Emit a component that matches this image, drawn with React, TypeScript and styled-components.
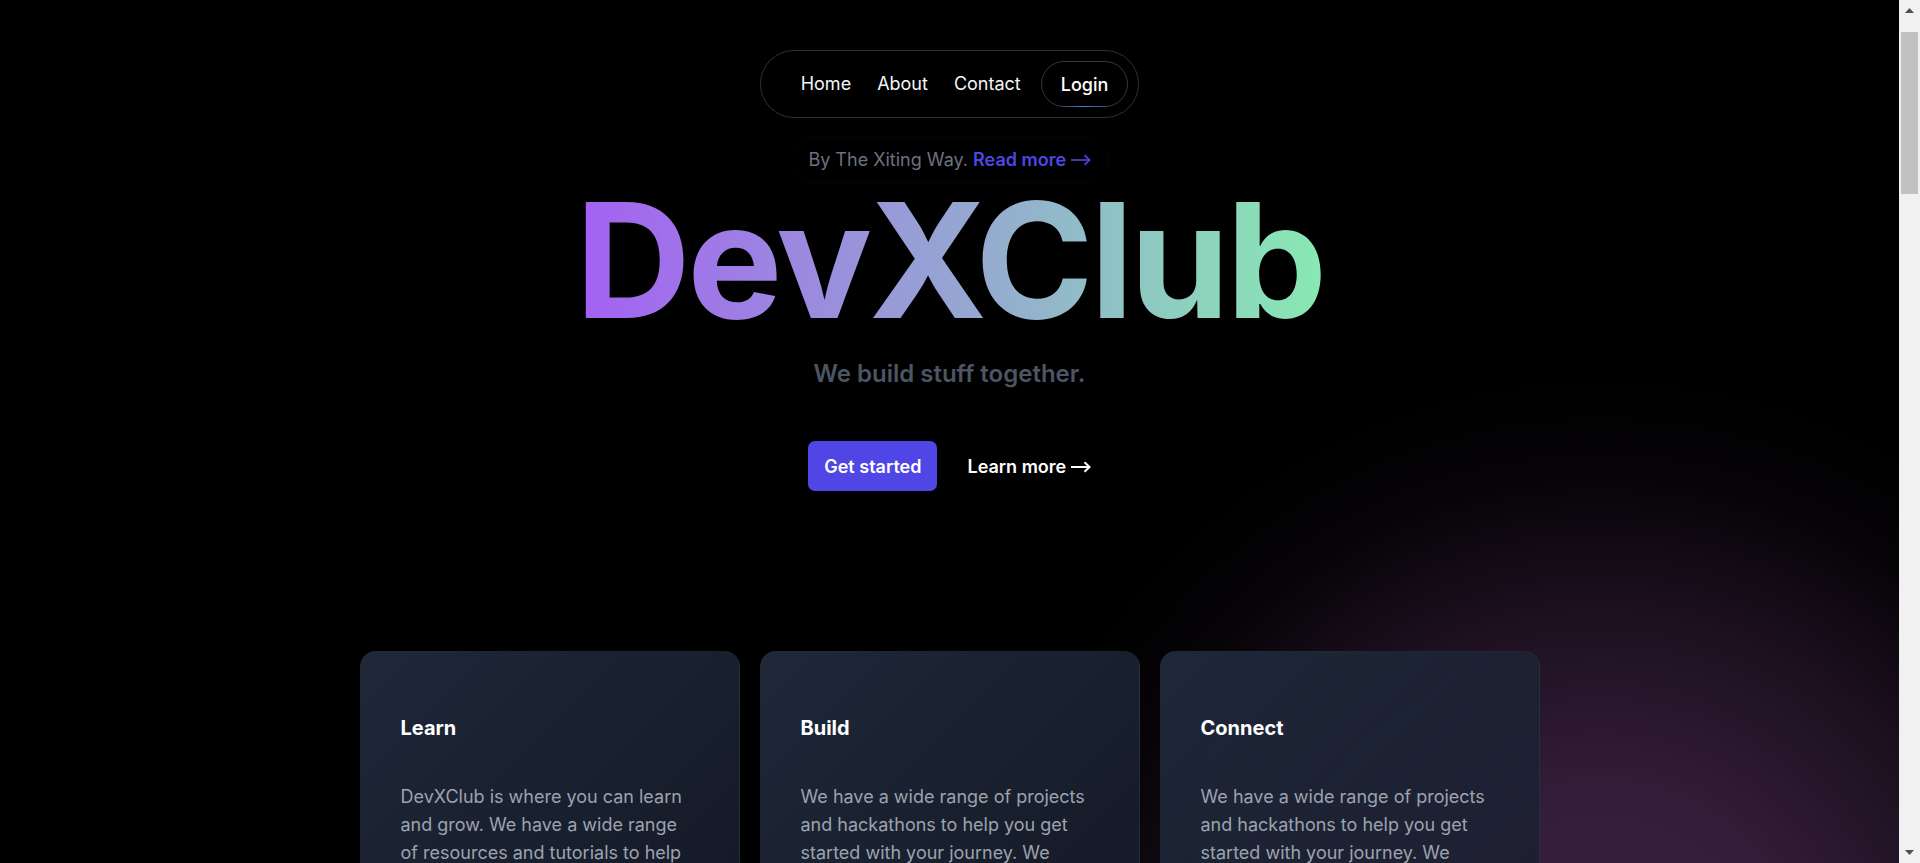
import React from "react";
import styled, { createGlobalStyle } from "styled-components";

const GlobalStyle = createGlobalStyle`
  html, body {
    margin: 0;
    padding: 0;
    height: 100%;
    overflow: hidden;
    background: #000;
  }
  body {
    font-family: Inter, "Noto Sans", "Liberation Sans", sans-serif;
    color: #fff;
    -webkit-font-smoothing: antialiased;
  }
  * { box-sizing: border-box; }
`;

const Shell = styled.div`
  display: flex;
  height: 100vh;
  background: #000;
`;

const Viewport = styled.div`
  flex: 1;
  height: 100%;
  overflow-y: auto;
  scrollbar-width: none;
  &::-webkit-scrollbar { display: none; }
`;

const ScrollRail = styled.div`
  width: 21px;
  height: 100%;
  flex-shrink: 0;
  display: flex;
  flex-direction: column;
  background: #f1f1f1;
`;

const RailButton = styled.div`
  height: 21px;
  display: flex;
  align-items: center;
  justify-content: center;
  flex-shrink: 0;
`;

const RailTrack = styled.div`
  flex: 1;
  padding: 11px 2px 0;
`;

const RailThumb = styled.div`
  height: 162px;
  background: #c1c1c1;
`;

const Page = styled.div`
  min-height: 4400px;
  background:
    radial-gradient(circle at 1600px 990px, rgba(58, 32, 63, 1) 0px, rgba(53, 30, 58, 0.97) 200px, rgba(38, 21, 42, 0.75) 380px, rgba(16, 9, 18, 0.35) 520px, rgba(0, 0, 0, 0) 620px),
    #000;
  background-repeat: no-repeat;
  display: flex;
  flex-direction: column;
  align-items: center;
`;

const Header = styled.header`
  padding-top: 50px;
  display: flex;
  justify-content: center;
`;

const NavPill = styled.nav`
  display: flex;
  align-items: center;
  gap: 2px;
  height: 68px;
  padding: 10px 10px 10px 28px;
  border: 1px solid #303030;
  border-radius: 999px;
`;

const NavLink = styled.a`
  padding: 0 12px;
  font-size: 18px;
  line-height: 28px;
  color: #f5f5f5;
  text-decoration: none;
`;

const LoginButton = styled.a`
  position: relative;
  margin-left: 6px;
  height: 46px;
  padding: 0 19px;
  display: flex;
  align-items: center;
  font-size: 18px;
  font-weight: 500;
  color: #fff;
  text-decoration: none;
  border: 1px solid #383838;
  border-radius: 999px;

  &::after {
    content: "";
    position: absolute;
    left: 50%;
    bottom: -1px;
    width: 52px;
    height: 1px;
    transform: translateX(-50%);
    background: linear-gradient(to right, rgba(59, 130, 246, 0), #3b82f6, rgba(59, 130, 246, 0));
  }
`;

const Hero = styled.section`
  display: flex;
  flex-direction: column;
  align-items: center;
  margin-top: 19px;
`;

const Tagline = styled.div`
  padding: 8px 16px;
  border: 1px solid rgba(255, 255, 255, 0.025);
  border-radius: 999px;
  font-size: 18px;
  line-height: 28px;
  color: #6b7280;
`;

const TaglineLink = styled.a`
  color: #4f46e5;
  font-weight: 600;
  text-decoration: none;
`;

const ArrowIcon = styled.svg<{ $weight: number }>`
  width: 20px;
  height: 12px;
  vertical-align: middle;
  margin-top: -2px;
  stroke: currentColor;
  stroke-width: ${(p) => p.$weight};
  fill: none;
  stroke-linecap: butt;
  stroke-linejoin: miter;
`;

const Arrow = ({ weight = 2 }: { weight?: number }) => (
  <ArrowIcon $weight={weight} viewBox="0 0 20 12" aria-hidden="true">
    <path d="M0 6 H18.5" />
    <path d="M13.5 1.2 L18.6 6 L13.5 10.8" />
  </ArrowIcon>
);

const Title = styled.h1`
  margin: 5px 0 0;
  font-size: 160px;
  line-height: 144px;
  font-weight: 700;
  letter-spacing: -3.4px;
  background: linear-gradient(to right, #a45ff3, #88eab2);
  -webkit-background-clip: text;
  background-clip: text;
  color: transparent;
  padding: 0 4px;
`;

const Subtitle = styled.p`
  margin: 26px 0 0;
  font-size: 24px;
  line-height: 32px;
  font-weight: 600;
  color: #4b5563;
`;

const Actions = styled.div`
  margin-top: 51px;
  display: flex;
  align-items: center;
  gap: 30px;
`;

const PrimaryButton = styled.a`
  display: flex;
  align-items: center;
  height: 50px;
  padding: 0 16px;
  border-radius: 7px;
  background: #4f46e5;
  color: #fff;
  font-size: 18px;
  font-weight: 600;
  text-decoration: none;
`;

const TextButton = styled.a`
  color: #fff;
  font-size: 18px;
  font-weight: 600;
  text-decoration: none;
`;

const CardGrid = styled.section`
  margin-top: 160px;
  width: 1180px;
  display: grid;
  grid-template-columns: repeat(3, 1fr);
  gap: 20px;
`;

const Card = styled.article`
  padding: 62px 40px 48px;
  border-radius: 16px;
  border: 1px solid rgba(255, 255, 255, 0.04);
  background: linear-gradient(135deg, rgba(31, 41, 58, 0.98), rgba(24, 30, 46, 0.78));
`;

const CardTitle = styled.h3`
  margin: 0;
  font-size: 20px;
  line-height: 28px;
  font-weight: 700;
  color: #fff;
`;

const CardText = styled.p`
  margin: 41px 0 0;
  font-size: 18px;
  line-height: 28px;
  color: #9ca3af;
`;

const Section = styled.section`
  margin-top: 200px;
  width: 1180px;
  display: flex;
  flex-direction: column;
  align-items: center;
  gap: 24px;
`;

const SectionTitle = styled.h2`
  margin: 0;
  font-size: 48px;
  line-height: 56px;
  font-weight: 700;
  color: #fff;
`;

const SectionText = styled.p`
  margin: 0;
  max-width: 720px;
  text-align: center;
  font-size: 18px;
  line-height: 28px;
  color: #9ca3af;
`;

const Panel = styled.div`
  width: 100%;
  height: 520px;
  border-radius: 16px;
  border: 1px solid rgba(255, 255, 255, 0.05);
  background: linear-gradient(135deg, rgba(31, 41, 58, 0.6), rgba(17, 24, 39, 0.4));
`;

const Footer = styled.footer`
  margin-top: auto;
  padding: 48px 0;
  font-size: 14px;
  color: #6b7280;
`;

const cards = [
  {
    title: "Learn",
    text: "DevXClub is where you can learn and grow. We have a wide range of resources and tutorials to help you get started with your journey as a developer.",
  },
  {
    title: "Build",
    text: "We have a wide range of projects and hackathons to help you get started with your journey. We encourage everyone to build real things together.",
  },
  {
    title: "Connect",
    text: "We have a wide range of projects and hackathons to help you get started with your journey. We connect developers from all over the world.",
  },
];

export default function App() {
  return (
    <>
      <GlobalStyle />
      <Shell>
        <Viewport>
          <Page>
            <Header>
              <NavPill>
                <NavLink href="#">Home</NavLink>
                <NavLink href="#">About</NavLink>
                <NavLink href="#">Contact</NavLink>
                <LoginButton href="#">Login</LoginButton>
              </NavPill>
            </Header>
            <Hero>
              <Tagline>
                By The Xiting Way.{" "}
                <TaglineLink href="#">
                  Read more <Arrow weight={1.6} />
                </TaglineLink>
              </Tagline>
              <Title>DevXClub</Title>
              <Subtitle>We build stuff together.</Subtitle>
              <Actions>
                <PrimaryButton href="#">Get started</PrimaryButton>
                <TextButton href="#">
                  Learn more <Arrow weight={2} />
                </TextButton>
              </Actions>
            </Hero>
            <CardGrid>
              {cards.map((c) => (
                <Card key={c.title}>
                  <CardTitle>{c.title}</CardTitle>
                  <CardText>{c.text}</CardText>
                </Card>
              ))}
            </CardGrid>
            <Section>
              <SectionTitle>Projects</SectionTitle>
              <SectionText>Explore what our members have been building together.</SectionText>
              <Panel />
            </Section>
            <Section>
              <SectionTitle>Events</SectionTitle>
              <SectionText>Hackathons, workshops and meetups for developers of every level.</SectionText>
              <Panel />
            </Section>
            <Footer>© DevXClub. All rights reserved.</Footer>
          </Page>
        </Viewport>
        <ScrollRail aria-hidden="true">
          <RailButton>
            <svg width="9" height="5" viewBox="0 0 9 5">
              <path d="M0 5 L4.5 0 L9 5 Z" fill="#505050" />
            </svg>
          </RailButton>
          <RailTrack>
            <RailThumb />
          </RailTrack>
          <RailButton>
            <svg width="9" height="5" viewBox="0 0 9 5">
              <path d="M0 0 L4.5 5 L9 0 Z" fill="#505050" />
            </svg>
          </RailButton>
        </ScrollRail>
      </Shell>
    </>
  );
}
